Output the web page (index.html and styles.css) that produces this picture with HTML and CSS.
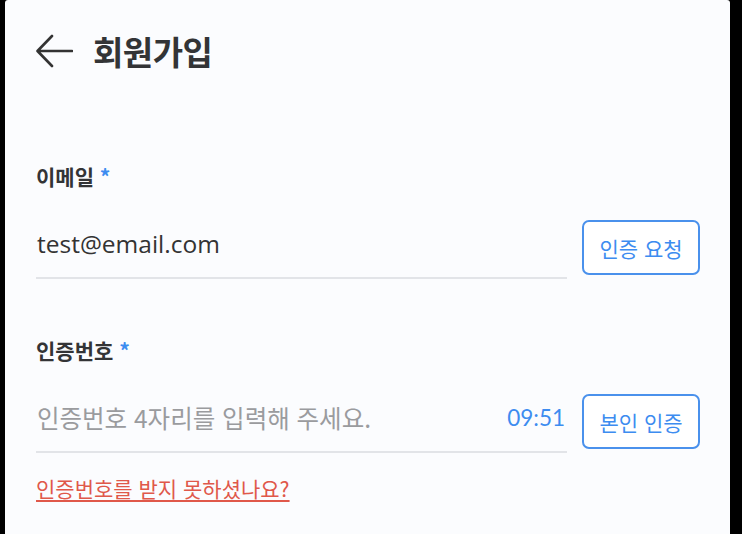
FILE: index.html
```html
<!DOCTYPE html>
<html lang="ko">
<head>
<meta charset="utf-8">
<link rel="stylesheet" href="styles.css">
</head>
<body>
<div class="screen">
  <header class="header">
    <svg class="back" width="38" height="34" viewBox="0 0 38 34">
      <path d="M37 17H3M17 2L2.5 17L17 32" fill="none" stroke="#333" stroke-width="2.6" stroke-linecap="round" stroke-linejoin="round"/>
    </svg>
    <h1 class="title">회원가입</h1>
  </header>
  <main class="form">
    <div class="field">
      <div class="label">이메일 <span class="req">*</span></div>
      <div class="row">
        <div class="input"><span class="value">test@email.com</span></div>
        <button class="btn">인증 요청</button>
      </div>
    </div>
    <div class="field second">
      <div class="label">인증번호 <span class="req">*</span></div>
      <div class="row">
        <div class="input"><span class="placeholder">인증번호 4자리를 입력해 주세요.</span><span class="timer">09:51</span></div>
        <button class="btn">본인 인증</button>
      </div>
      <a class="help" href="#">인증번호를 받지 못하셨나요?</a>
    </div>
  </main>
</div>
</body>
</html>
```
FILE: styles.css
```css
html, body {
  margin: 0;
  padding: 0;
  background: #000;
  height: 100%;
}
body {
  font-family: "Lato", "Noto Sans CJK KR", sans-serif;
  overflow: hidden;
}
.screen {
  margin-left: 5px;
  width: 725px;
  height: 534px;
  background: #fbfcfe;
  border-radius: 3px 3px 0 0;
}
.header {
  display: flex;
  align-items: center;
  height: 102px;
  padding-left: 30px;
}
.back {
  display: block;
  margin-right: 20px;
}
.title {
  margin: 0;
  font-family: "Noto Sans CJK KR", sans-serif;
  font-size: 33px;
  font-weight: 700;
  color: #333436;
  letter-spacing: -0.5px;
  line-height: 40px;
}
.form {
  padding: 60px 30px 0 31px;
}
.label {
  font-family: "Noto Sans CJK KR", sans-serif;
  font-size: 21px;
  font-weight: 700;
  color: #333436;
  line-height: 28px;
}
.req {
  color: #3d8cf0;
}
.row {
  display: flex;
  align-items: center;
  gap: 15px;
  margin-top: 26px;
}
.input {
  flex: 1;
  display: flex;
  align-items: center;
  justify-content: space-between;
  height: 61px;
  border-bottom: 2px solid #e2e4e8;
  padding-left: 1px;
}
.value {
  font-size: 24.5px;
  color: #333;
  font-family: "Open Sans", "Noto Sans CJK KR", sans-serif;
  margin-top: -6px;
}
.placeholder {
  font-family: "Noto Sans CJK KR", sans-serif;
  font-size: 24.5px;
  color: #9a9b9e;
  margin-top: -6px;
}
.timer {
  font-size: 22.5px;
  color: #3d8cf0;
  margin-right: 2px;
  margin-top: -6px;
}
.btn {
  width: 118px;
  height: 55px;
  border: 2px solid #4a91ec;
  border-radius: 7px;
  background: #fff;
  color: #3d8cf0;
  font-family: "Noto Sans CJK KR", sans-serif;
  font-size: 21px;
  padding: 0;
}
.second {
  margin-top: 57px;
}
.help {
  display: inline-block;
  margin-top: 20px;
  font-family: "Noto Sans CJK KR", sans-serif;
  font-size: 21px;
  line-height: 30px;
  color: #e0584a;
  text-decoration: underline;
  text-underline-offset: 3px;
}
```
